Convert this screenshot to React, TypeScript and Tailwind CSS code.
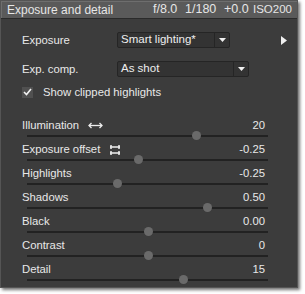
import React from "react";

const font = { fontFamily: '"Liberation Sans", Arial, sans-serif' };

function DownTri() {
  return (
    <svg width="7" height="4" viewBox="0 0 7 4">
      <path d="M0 0 L7 0 L3.5 4 Z" fill="#f0f0f0" />
    </svg>
  );
}

function Dropdown({ text, width }: { text: string; width: string }) {
  return (
    <div className={`flex h-[16px] ${width} rounded-[2px] border border-[#252525] bg-[#333333]`}>
      <div className="flex flex-1 items-center pl-[3px] text-[11.5px] text-[#eeeeee]">{text}</div>
      <div className="flex w-[15px] items-center justify-center border-l border-[#252525]">
        <DownTri />
      </div>
    </div>
  );
}

function Slider({ label, value, pos, icon }: { label: string; value: string; pos: number; icon?: React.ReactNode }) {
  return (
    <div className="h-[24px]">
      <div className="flex h-[13px] items-center pr-[2px] text-[11.3px] leading-[13px] text-[#e8e8e8]">
        <span>{label}</span>
        {icon}
        <span className="ml-auto">{value}</span>
      </div>
      <div className="relative ml-[5px] h-[7px] w-[241px]">
        <div className="absolute left-0 right-0 top-[3px] h-[2px] bg-[#222222]" />
        <div
          className="absolute top-[-1px] h-[9px] w-[9px] rounded-full bg-[#6a6a6a]"
          style={{ left: pos - 27 - 4.5 }}
        />
      </div>
    </div>
  );
}

const IllumIcon = (
  <svg className="ml-[9px]" width="15" height="7" viewBox="0 0 15 7">
    <path d="M1 3.5 H14" stroke="#eeeeee" strokeWidth="1.3" />
    <path d="M3.5 1 L1 3.5 L3.5 6" stroke="#eeeeee" strokeWidth="1.3" fill="none" />
    <path d="M11.5 1 L14 3.5 L11.5 6" stroke="#eeeeee" strokeWidth="1.3" fill="none" />
  </svg>
);

const OffsetIcon = (
  <svg className="ml-[9px]" width="12" height="12" viewBox="0 0 12 12">
    <path d="M1 3 H11 M1 9 H11" stroke="#eeeeee" strokeWidth="1.5" />
    <path d="M2 1 V5 M10 1 V5 M2 7 V11 M10 7 V11" stroke="#eeeeee" strokeWidth="1.5" />
  </svg>
);

export default function App() {
  return (
    <div className="h-[294px] w-[305px] bg-white" style={font}>
      <div className="flex h-[288px] w-[298px] flex-col border border-[#555555] bg-[#3c3c3c] shadow-[2px_2px_3px_rgba(0,0,0,0.55)]">
        <div className="flex h-[19px] items-center overflow-hidden border-b border-[#2a2a2a] bg-[#5a5a5a] pl-[6px] text-[12px] text-[#e6e6e6] shadow-[inset_1px_1px_0_#6e6e6e]">
          <span className="w-[146px] shrink-0">Exposure and detail</span>
          <span className="w-[32px] shrink-0 text-[12.5px]">f/8.0</span>
          <span className="w-[39px] shrink-0 text-[12.5px]">1/180</span>
          <span className="w-[29px] shrink-0 text-[12.5px]">+0.0</span>
          <span className="shrink-0 text-[11.5px]">ISO200</span>
        </div>
        <div className="flex flex-col pl-[21px] pr-[30px]">
          <div className="mt-[13px] flex h-[16px] items-center">
            <span className="w-[95px] text-[11.3px] text-[#e8e8e8]">Exposure</span>
            <Dropdown text="Smart lighting*" width="w-[113px]" />
            <div className="ml-auto mr-[-20px]">
              <svg width="6" height="9" viewBox="0 0 6 9">
                <path d="M0 0 L6 4.5 L0 9 Z" fill="#f0f0f0" />
              </svg>
            </div>
          </div>
          <div className="mt-[13px] flex h-[16px] items-center">
            <span className="w-[95px] text-[11.3px] text-[#e8e8e8]">Exp. comp.</span>
            <Dropdown text="As shot" width="w-[132px]" />
          </div>
          <div className="mt-[9px] flex h-[12px] items-center">
            <div className="flex h-[11px] w-[11px] items-center justify-center bg-[#505050]">
              <svg width="9" height="8" viewBox="0 0 9 8">
                <path d="M1 4 L3.5 6.5 L8 1" stroke="#f2f2f2" strokeWidth="1.6" fill="none" />
              </svg>
            </div>
            <span className="ml-[10px] text-[11.3px] text-[#e8e8e8]">Show clipped highlights</span>
          </div>
          <div className="mt-[21px] flex flex-col">
            <Slider label="Illumination" value="20" pos={196} icon={IllumIcon} />
            <Slider label="Exposure offset" value="-0.25" pos={138} icon={OffsetIcon} />
            <Slider label="Highlights" value="-0.25" pos={117} />
            <Slider label="Shadows" value="0.50" pos={207} />
            <Slider label="Black" value="0.00" pos={148} />
            <Slider label="Contrast" value="0" pos={148} />
            <Slider label="Detail" value="15" pos={183} />
          </div>
        </div>
      </div>
    </div>
  );
}
